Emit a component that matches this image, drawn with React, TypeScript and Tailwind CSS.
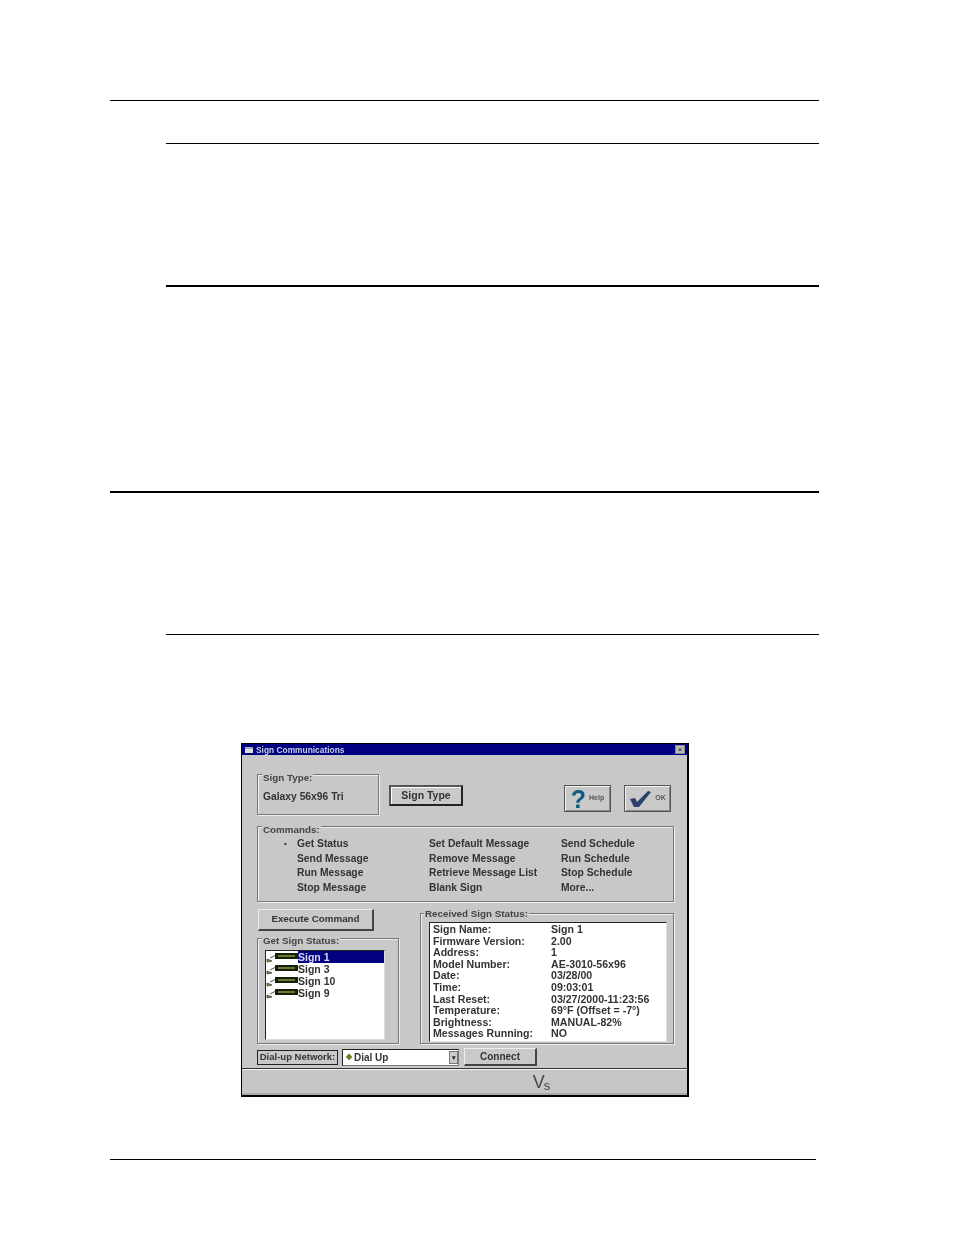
import React from "react";

const raised = "border border-t-[#eee] border-l-[#eee] border-r-[#444] border-b-[#444] bg-[#c9c9c9]";
const framed = "border border-[#555] bg-[#c9c9c9] shadow-[inset_1px_1px_0_#f2f2f2,inset_-1px_-1px_0_#888]";
const groove = "relative border border-[#777] shadow-[1px_1px_0_#eee,inset_1px_1px_0_#eee]";

function Legend({ className, children }: { className: string; children: React.ReactNode }) {
  return <span className={"absolute bg-[#c8c8c8] px-[1px] text-[9.8px] leading-[12px] font-bold whitespace-nowrap text-[#444] " + className}>{children}</span>;
}

function Rule({ className }: { className: string }) {
  return <div className={"bg-black " + className} />;
}

const commands = [
  ["Get Status", "Set Default Message", "Send Schedule"],
  ["Send Message", "Remove Message", "Run Schedule"],
  ["Run Message", "Retrieve Message List", "Stop Schedule"],
  ["Stop Message", "Blank Sign", "More..."],
];

const status = [
  ["Sign Name:", "Sign 1"],
  ["Firmware Version:", "2.00"],
  ["Address:", "1"],
  ["Model Number:", "AE-3010-56x96"],
  ["Date:", "03/28/00"],
  ["Time:", "09:03:01"],
  ["Last Reset:", "03/27/2000-11:23:56"],
  ["Temperature:", "69°F (Offset = -7°)"],
  ["Brightness:", "MANUAL-82%"],
  ["Messages Running:", "NO"],
];

function SignIcon() {
  return (
    <svg width="32" height="11" viewBox="0 0 32 11" className="shrink-0">
      <path d="M1 7 L6 9 L1 10 Z" fill="#8a8a30" stroke="#444" strokeWidth="0.8" />
      <path d="M4 6 L10 3" stroke="#555" strokeWidth="1" />
      <rect x="9" y="1" width="23" height="6" fill="#15200c" />
      <rect x="12" y="3" width="17" height="2" fill="#6a7a2a" />
    </svg>
  );
}

export default function App() {
  return (
    <div className="relative h-[1235px] w-[954px] overflow-hidden bg-white font-['Liberation_Sans',sans-serif]">
      <Rule className="ml-[110px] mt-[100px] h-px w-[709px]" />
      <Rule className="ml-[166px] mt-[42px] h-px w-[653px]" />
      <Rule className="ml-[166px] mt-[141px] h-[2px] w-[653px]" />
      <Rule className="ml-[110px] mt-[204px] h-[2px] w-[709px]" />
      <Rule className="ml-[166px] mt-[141px] h-px w-[653px]" />

      <div className="ml-[241px] mt-[108px] flex h-[354px] w-[448px] flex-col border border-r-2 border-b-2 border-black bg-[#c8c8c8] text-[#333] blur-[0.7px]">
        <div className="flex h-[11px] items-center gap-[3px] bg-[#000080] pl-[3px] pr-[2px]">
          <div className="h-[6px] w-[8px] border-t-2 border-[#9ab] bg-[#dde]" />
          <span className="text-[8.4px] leading-[10px] font-bold text-[#c8d0e8]">Sign Communications</span>
          <div className="ml-auto h-[9px] w-[10px] border border-[#888] bg-[#bbb] text-center text-[8px] leading-[7px] text-black">×</div>
        </div>

        <div className="flex flex-1 flex-col pl-[15px] pt-[19px]">
          <div className="flex items-start">
            <div className={groove + " flex h-[41px] w-[122px] items-center pl-[5px]"}>
              <Legend className="left-[4px] -top-[3px]">Sign Type:</Legend>
              <span className="mt-[5px] text-[10.3px] font-bold">Galaxy 56x96 Tri</span>
            </div>
            <div className="ml-[10px] mt-[11px] flex h-[21px] w-[74px] items-center justify-center border-2 border-t-[#555] border-l-[#555] border-r-[#222] border-b-[#222] bg-[#c9c9c9] text-[10.5px] font-bold shadow-[inset_1px_1px_0_#fff]">
              Sign Type
            </div>
            <div className={framed + " ml-[101px] mt-[11px] flex h-[27px] w-[47px] items-center justify-center gap-[3px]"}>
              <span className="text-[25px] leading-[24px] font-bold text-[#0c5c80]">?</span>
              <span className="text-[7px] font-bold text-[#555]">Help</span>
            </div>
            <div className={framed + " ml-[13px] mt-[11px] flex h-[27px] w-[47px] items-center justify-center gap-[3px]"}>
              <svg width="23" height="18" viewBox="0 0 23 18">
                <path d="M1 9 L6 8 L8 12 L19 1 L22 2 L10 17 L5 17 Z" fill="#2a3f6a" />
              </svg>
              <span className="text-[7px] font-bold text-[#555]">OK</span>
            </div>
          </div>

          <div className={groove + " mt-[11px] h-[76px] w-[417px]"}>
            <Legend className="left-[4px] -top-[3px]">Commands:</Legend>
            <div className="grid grid-cols-[132px_132px_1fr] pl-[39px] pt-[10px] text-[10.3px] leading-[14.7px] font-bold">
              {commands.map((row, i) =>
                row.map((c, j) => (
                  <div key={c} className="relative whitespace-nowrap">
                    {i === 0 && j === 0 && <span className="absolute -left-[13px] top-0 text-[8px]">•</span>}
                    {c}
                  </div>
                ))
              )}
            </div>
          </div>

          <div className="mt-[7px] flex items-start">
            <div className="w-[142px]">
              <div className={raised + " ml-[1px] flex h-[22px] w-[116px] items-center justify-center border-r-2 border-b-2 text-[9.8px] font-bold"}>
                Execute Command
              </div>
              <div className={groove + " mt-[7px] h-[106px] w-[142px] pl-[7px] pt-[11px]"}>
                <Legend className="left-[4px] -top-[4px]">Get Sign Status:</Legend>
                <div className="h-[90px] w-[120px] border border-t-[#222] border-l-[#222] border-r-[#ddd] border-b-[#ddd] bg-white text-[10.5px] leading-[12px] font-bold">
                  {["Sign 1", "Sign 3", "Sign 10", "Sign 9"].map((s, i) => (
                    <div key={s} className="flex items-center">
                      <SignIcon />
                      <span className={i === 0 ? "flex-1 bg-[#000080] text-[#d8d8f0]" : "flex-1 text-[#333]"}>{s}</span>
                    </div>
                  ))}
                </div>
              </div>
            </div>
            <div className={groove + " ml-[21px] mt-[4px] h-[131px] w-[254px] pl-[8px] pt-[8px]"}>
              <Legend className="left-[3px] -top-[6px]">Received Sign Status:</Legend>
              <div className="h-[120px] w-[238px] border border-t-[#222] border-l-[#222] border-r-[#ddd] border-b-[#ddd] bg-white pl-[3px] pt-[1px] text-[10.6px] leading-[11.6px] font-bold">
                {status.map(([k, v]) => (
                  <div key={k} className="grid grid-cols-[118px_1fr] whitespace-nowrap">
                    <span>{k}</span>
                    <span>{v}</span>
                  </div>
                ))}
              </div>
            </div>
          </div>

          <div className="mt-[4px] flex items-center">
            <div className="flex h-[15px] w-[81px] items-center justify-center border border-[#222] text-[9.5px] font-bold whitespace-nowrap">
              Dial-up Network:
            </div>
            <div className="ml-[4px] flex h-[17px] w-[117px] items-center border border-t-[#222] border-l-[#222] border-r-[#777] border-b-[#777] bg-white pl-[3px] text-[10px] font-bold">
              <span className="mr-[2px] text-[8px] text-[#7a7a20]">◆</span>Dial Up
              <span className="ml-auto h-[13px] w-[9px] border border-[#777] bg-[#ccc] text-center text-[7px] leading-[12px]">▾</span>
            </div>
            <div className={raised + " ml-[5px] flex h-[18px] w-[73px] items-center justify-center border-r-2 border-b-2 text-[10px] font-bold"}>
              Connect
            </div>
          </div>
        </div>

        <div className="flex h-[27px] items-center justify-center border-t border-[#333] bg-[#c6c6c6] pl-[154px] shadow-[inset_0_1px_0_#f4f4f4,inset_0_-2px_0_#aaa]">
          <span className="text-[18px] leading-[20px] tracking-[-1px] text-[#444]">V</span>
          <span className="mt-[7px] text-[13px] leading-[14px] text-[#444]">s</span>
        </div>
      </div>

      <Rule className="ml-[110px] mt-[62px] h-px w-[706px]" />
    </div>
  );
}
